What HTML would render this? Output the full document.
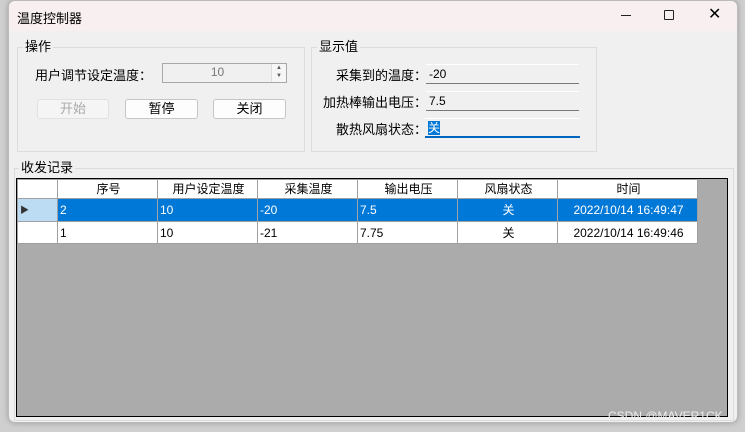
<!DOCTYPE html>
<html><head><meta charset="utf-8"><style>
*{box-sizing:border-box;margin:0;padding:0}
body{width:745px;height:432px;background:#cfcfcf;font-family:"Liberation Sans","Noto Sans CJK SC",sans-serif;font-size:12px;color:#000;position:relative;overflow:hidden}
.a{position:absolute}
.win{left:8px;top:0;width:730px;height:423px;background:#f0f0f0;border:1px solid #bbb;border-radius:7px;overflow:hidden;box-shadow:0 0 6px rgba(0,0,0,.25)}
.title{left:0;top:0;width:100%;height:30px;background:#f8eff0}
.gb{border:1px solid #dcdcdc}
.lg{background:#f0f0f0;padding:0 2px;font-size:13px;line-height:14px}
.tb{background:#f0f0f0;border-bottom:1px solid #7a7a7a;border-top:1px solid #fff;padding-left:3px;line-height:18px;font-size:12px}
.btn{background:#fdfdfd;border:1px solid #c5c5c5;border-radius:3px;text-align:center;line-height:18px;font-size:13px}
.lb{font-size:13px;text-align:right;width:120px}
table{border-collapse:collapse;font-size:12px;table-layout:fixed}
td{border:1px solid #a0a0a0;padding:0 0 0 2px;background:#fff;line-height:14px;overflow:hidden;white-space:nowrap}
</style></head><body>
<div class="a win">
<div class="a title"></div>
<div class="a" style="left:8px;top:7px;font-size:13px">温度控制器</div>
<div class="a" style="left:612px;top:14px;width:10px;height:1px;background:#222"></div>
<div class="a" style="left:655px;top:9px;width:10px;height:10px;border:1px solid #222;border-radius:1px"></div>
<div class="a" style="left:699px;top:3px;font-size:16px">✕</div>

<div class="a gb" style="left:8px;top:46px;width:288px;height:105px"></div>
<div class="a lg" style="left:14px;top:39px">操作</div>
<div class="a" style="left:26px;top:64px;font-size:13px">用户调节设定温度：</div>
<div class="a" style="left:153px;top:62px;width:125px;height:20px;border:1px solid #a8a8a8;background:#f0f0f0;text-align:center;line-height:17px;color:#777;padding-right:14px">10</div>
<div class="a" style="left:262px;top:63px;width:15px;height:18px;background:#f6f6f6;border-left:1px solid #ddd;font-size:6px;line-height:8px;text-align:center;color:#555">▲<br>▼</div>
<div class="a btn" style="left:28px;top:98px;width:72px;height:20px;color:#aaa;background:#f5f5f5;border-color:#e0e0e0">开始</div>
<div class="a btn" style="left:116px;top:98px;width:73px;height:20px">暂停</div>
<div class="a btn" style="left:204px;top:98px;width:73px;height:20px">关闭</div>

<div class="a gb" style="left:302px;top:46px;width:286px;height:105px"></div>
<div class="a lg" style="left:308px;top:39px">显示值</div>
<div class="a lb" style="left:298px;top:64px">采集到的温度：</div>
<div class="a lb" style="left:298px;top:91px">加热棒输出电压：</div>
<div class="a lb" style="left:298px;top:118px">散热风扇状态：</div>
<div class="a tb" style="left:417px;top:63px;width:153px;height:20px">-20</div>
<div class="a tb" style="left:417px;top:90px;width:153px;height:20px">7.5</div>
<div class="a tb" style="left:416px;top:117px;width:155px;height:20px;border-bottom:2px solid #0067c0"><span style="background:#0078d7;color:#fff">关</span></div>

<div class="a gb" style="left:5px;top:167px;width:720px;height:253px"></div>
<div class="a lg" style="left:10px;top:160px">收发记录</div>
<div class="a" style="left:7px;top:177px;width:712px;height:239px;background:#ababab;border:1px solid #000">
<table class="a" style="left:0;top:0;width:680px">
<colgroup><col style="width:40px"><col style="width:100px"><col style="width:100px"><col style="width:100px"><col style="width:100px"><col style="width:100px"><col style="width:140px"></colgroup>
<tr style="text-align:center;height:19px"><td></td><td>序号</td><td>用户设定温度</td><td>采集温度</td><td>输出电压</td><td>风扇状态</td><td>时间</td></tr>
<tr style="color:#fff;height:23px"><td style="background:#bcdcf4;color:#333;font-size:9px">▶</td><td style="background:#0078d7">2</td><td style="background:#0078d7">10</td><td style="background:#0078d7">-20</td><td style="background:#0078d7">7.5</td><td style="background:#0078d7;text-align:center">关</td><td style="background:#0078d7;text-align:center">2022/10/14 16:49:47</td></tr>
<tr style="height:22px"><td></td><td>1</td><td>10</td><td>-21</td><td>7.75</td><td style="text-align:center">关</td><td style="text-align:center">2022/10/14 16:49:46</td></tr>
</table>
</div>
</div>
<div class="a" style="left:608px;top:409px;color:#eee;font-size:12px">CSDN @MAVER1CK</div>
</body></html>
